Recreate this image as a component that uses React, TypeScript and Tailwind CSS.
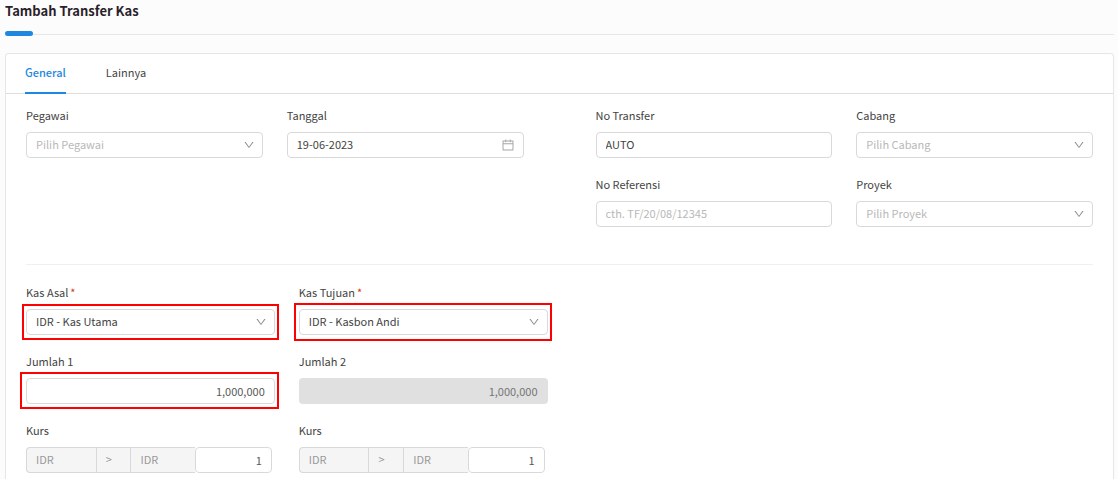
import { useState } from "react";
import type { ReactNode } from "react";
import { AiOutlineCalendar, AiOutlineDown } from "react-icons/ai";

const CONTROL = "block w-full h-[26px] rounded border border-[#d9d9d9] bg-white px-[9px] text-[11px] leading-[20px] outline-none placeholder:text-[#b8b8b8]";

interface FieldProps {
  id: string; label: string; required?: boolean; children: ReactNode;
}

function Field({ id, label, required, children }: FieldProps) {
  return (
    <div className="flex flex-col gap-[7px]">
      <label htmlFor={id} className="text-[11px] leading-[20px]">
        {label}
        {required && <span className="ml-0.5 text-[#d4380d]">*</span>}
      </label>
      {children}
    </div>
  );
}

function Highlight({ className }: { className: string }) {
  return <span className={`absolute border-2 border-[#ff0000] pointer-events-none ${className}`} />;
}

interface SelectProps {
  id: string; options: string[]; placeholder?: string; frame?: string;
}

function SelectBox({ id, options, placeholder, frame }: SelectProps) {
  const [value, setValue] = useState(placeholder ? "" : options[0]);
  return (
    <div className="relative">
      <select
        id={id}
        value={value}
        onChange={e => setValue(e.target.value)}
        className={`${CONTROL} appearance-none pb-0.5 ${value ? "" : "text-[#b8b8b8]"}`}
      >
        {placeholder && <option value="">{placeholder}</option>}
        {options.map(o => <option key={o} value={o}>{o}</option>)}
      </select>
      <AiOutlineDown className="absolute right-2 top-[7px] size-3 text-[#8c8c8c] pointer-events-none" />
      {frame && <Highlight className={frame} />}
    </div>
  );
}

function Rate({ id }: { id: string }) {
  const cell = "flex items-center border border-r-0 border-[#d9d9d9] bg-[#f5f5f5] px-[9px] pb-0.5 text-[#999]";
  return (
    <div className="mr-[3px] grid h-[26px] grid-cols-[70fr_35fr_65fr_77fr] text-[11px] leading-[20px]">
      <span className={`${cell} rounded-l`}>IDR</span>
      <span className={cell}>&gt;</span>
      <span className={cell}>IDR</span>
      <input id={id} defaultValue="1" className={`${CONTROL} min-w-0 text-right text-[#595959]`} />
    </div>
  );
}

const TABS = ["General", "Lainnya"];

export default function App() {
  const [tab, setTab] = useState("General");

  return (
    <div className="flex min-h-screen flex-col bg-[#fcfcfc] pl-[5px] pr-1 text-[#434343] font-['Noto_Sans_CJK_SC','Noto_Sans',sans-serif]">
      <h1 className="pt-px text-[13px] leading-[20px] font-bold text-[#2b1f2b]">Tambah Transfer Kas</h1>
      <div className="mt-[10px] flex h-[5px] items-center">
        <span className="h-[5px] w-7 rounded-full bg-[#1e88e0]" />
        <span className="mt-0.5 h-px flex-1 bg-[#e6e6e6]" />
      </div>

      <main className="mt-[17px] flex-1 rounded-t border border-b-0 border-[#e6e6e6] bg-white">
        <nav className="flex h-10 gap-10 border-b border-[#dedede] px-[19px]">
          {TABS.map(t => (
            <button
              key={t}
              type="button"
              onClick={() => setTab(t)}
              className={`-mb-px border-b-2 pb-0.5 text-[11px] leading-[20px] ${t === tab ? "border-[#1e88e0] font-medium text-[#1e88e0]" : "border-transparent"}`}
            >
              {t}
            </button>
          ))}
        </nav>

        <form className="px-5 pt-[11px] pb-1">
          <div className="grid grid-cols-2 gap-x-[72px] border-b border-[#f0f0f0] pb-[37px]">
            <div className="grid grid-cols-2 content-start gap-x-6 gap-y-4">
              <Field id="pegawai" label="Pegawai">
                <SelectBox id="pegawai" placeholder="Pilih Pegawai" options={[]} />
              </Field>
              <Field id="tanggal" label="Tanggal">
                <div className="relative">
                  <input id="tanggal" defaultValue="19-06-2023" className={`${CONTROL} pb-0.5`} />
                  <AiOutlineCalendar className="absolute right-[9px] top-1.5 size-[14px] text-[#a6a6a6] pointer-events-none" />
                </div>
              </Field>
            </div>
            <div className="grid grid-cols-2 gap-x-6 gap-y-4">
              <Field id="no-transfer" label="No Transfer">
                <input id="no-transfer" defaultValue="AUTO" className={`${CONTROL} pb-0.5`} />
              </Field>
              <Field id="cabang" label="Cabang">
                <SelectBox id="cabang" placeholder="Pilih Cabang" options={[]} />
              </Field>
              <Field id="no-referensi" label="No Referensi">
                <input id="no-referensi" placeholder="cth. TF/20/08/12345" className={`${CONTROL} pb-0.5`} />
              </Field>
              <Field id="proyek" label="Proyek">
                <SelectBox id="proyek" placeholder="Pilih Proyek" options={[]} />
              </Field>
            </div>
          </div>

          <div className="mt-[17px] grid grid-cols-4 gap-x-6 gap-y-4">
            <Field id="kas-asal" label="Kas Asal" required>
              <SelectBox id="kas-asal" options={["IDR - Kas Utama"]} frame="-inset-x-1 -inset-y-[5px]" />
            </Field>
            <Field id="kas-tujuan" label="Kas Tujuan" required>
              <SelectBox id="kas-tujuan" options={["IDR - Kasbon Andi"]} frame="-left-[5px] -right-1 -inset-y-1.5" />
            </Field>
            <div className="col-start-1">
              <Field id="jumlah-1" label="Jumlah 1">
                <div className="relative">
                  <input id="jumlah-1" defaultValue="1,000,000" className={`${CONTROL} text-right text-[#595959]`} />
                  <Highlight className="-left-1.5 -right-1 -top-1.5 -bottom-[5px]" />
                </div>
              </Field>
            </div>
            <Field id="jumlah-2" label="Jumlah 2">
              <input
                id="jumlah-2"
                defaultValue="1,000,000"
                disabled
                className="block h-[26px] w-full rounded bg-[#e0e0e0] px-[10px] text-right text-[11px] leading-[20px] text-[#757575]"
              />
            </Field>
            <div className="col-start-1">
              <Field id="kurs-1" label="Kurs"><Rate id="kurs-1" /></Field>
            </div>
            <Field id="kurs-2" label="Kurs"><Rate id="kurs-2" /></Field>
          </div>
        </form>
      </main>
    </div>
  );
}
